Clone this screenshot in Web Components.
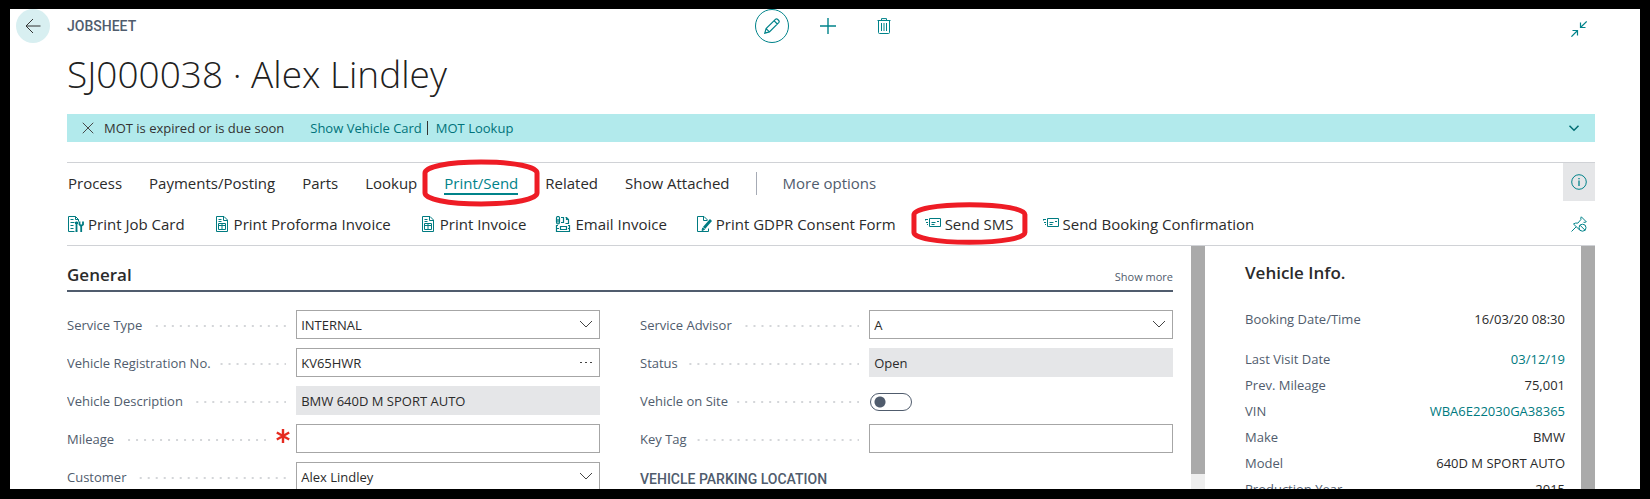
<!DOCTYPE html>
<html lang="en">
<head>
<meta charset="utf-8">
<title>Jobsheet SJ000038</title>
<style>
  body { margin: 0; background: #000; }
</style>
</head>
<body>
<job-app>
  <job-header slot="header" caption="Jobsheet" heading="SJ000038 · Alex Lindley"></job-header>
  <job-notice slot="header" message="MOT is expired or is due soon">
    <a slot="links" href="#vehicle">Show Vehicle Card</a>
    <a slot="links" href="#mot">MOT Lookup</a>
  </job-notice>
  <job-ribbon slot="header">
    <job-tab slot="tabs">Process</job-tab>
    <job-tab slot="tabs">Payments/Posting</job-tab>
    <job-tab slot="tabs">Parts</job-tab>
    <job-tab slot="tabs">Lookup</job-tab>
    <job-tab slot="tabs" active ring>Print/Send</job-tab>
    <job-tab slot="tabs">Related</job-tab>
    <job-tab slot="tabs">Show Attached</job-tab>
    <job-tab slot="more" quiet>More options</job-tab>
    <job-action slot="actions" icon="jobcard">Print Job Card</job-action>
    <job-action slot="actions" icon="invoice">Print Proforma Invoice</job-action>
    <job-action slot="actions" icon="invoice">Print Invoice</job-action>
    <job-action slot="actions" icon="email">Email Invoice</job-action>
    <job-action slot="actions" icon="consent">Print GDPR Consent Form</job-action>
    <job-action slot="actions" icon="send" ring>Send SMS</job-action>
    <job-action slot="actions" icon="send">Send Booking Confirmation</job-action>
  </job-ribbon>
  <job-section heading="General">
    <job-field slot="left" kind="select" label="Service Type" value="INTERNAL"></job-field>
    <job-field slot="left" kind="lookup" label="Vehicle Registration No." value="KV65HWR"></job-field>
    <job-field slot="left" kind="readonly" label="Vehicle Description" value="BMW 640D M SPORT AUTO"></job-field>
    <job-field slot="left" kind="text" label="Mileage" value="" required></job-field>
    <job-field slot="left" kind="select" label="Customer" value="Alex Lindley"></job-field>
    <job-field slot="right" kind="select" label="Service Advisor" value="A"></job-field>
    <job-field slot="right" kind="readonly" label="Status" value="Open"></job-field>
    <job-field slot="right" kind="toggle" label="Vehicle on Site"></job-field>
    <job-field slot="right" kind="text" label="Key Tag" value=""></job-field>
    <job-group slot="right">VEHICLE PARKING LOCATION</job-group>
  </job-section>
  <job-factbox slot="side" heading="Vehicle Info.">
    <job-fact label="Booking Date/Time" lead>16/03/20 08:30</job-fact>
    <job-fact label="Last Visit Date" link>03/12/19</job-fact>
    <job-fact label="Prev. Mileage">75,001</job-fact>
    <job-fact label="VIN" link>WBA6E22030GA38365</job-fact>
    <job-fact label="Make">BMW</job-fact>
    <job-fact label="Model">640D M SPORT AUTO</job-fact>
    <job-fact label="Production Year">2015</job-fact>
  </job-factbox>
</job-app>

<script>
const RESET = `
  *, *::before, *::after { box-sizing: border-box; }
  button { appearance: none; border: 0; margin: 0; padding: 0; background: none; font: inherit; color: inherit; }
  a { color: inherit; text-decoration: none; }
  svg { display: block; }
`;

const ICONS = {
  back: '<path d="M15.5 8H1M8 1L1 8l7 7"/>',
  pencil: '<path d="M.8 15.2l1.3-4.6L11.4 1.3q1-1 2.1 0l1.2 1.2q1 1 0 2.1L5.4 13.9zM2.1 10.6l3.3 3.3M10 2.7L13.3 6M1 14.2l.9.9" stroke-width="1.2"/>',
  plus: '<path d="M8 0v16M0 8h16" stroke-width="1.4"/>',
  trash: '<path d="M1.500 2.500h13M5.500 2.500V.6h5v1.900M2.500 2.500v12q0 1 1 1h9q1 0 1-1v-12M5.500 5v8M8 5v8M10.500 5v8"/>',
  collapse: '<path d="M15.700.4L9.500 6.500M9.500 1.500v5h5M.4 15.700L6.500 9.500M1.500 9.500h5v5" stroke-width="1.2"/>',
  info: '<circle cx="8" cy="8" r="7.300"/><path d="M8 6.600V12M8 4v1.200" stroke-width="1.3"/>',
  unpin: '<path d="M.5 15.500l4.700-4.700M2.500 8l5.600 5.500M2.500 8q2-1.400 4.400-.9l3-3.600q-.4-1.500.4-2.700l5 5q-1.300.8-2.800.5"/><circle cx="11.500" cy="11.700" r="3.500"/><path d="M9 9.200l5 5"/>',
  close: '<path d="M1 1l14 14M15 1L1 15" stroke-width="1.300"/>',
  jobcard: '<path d="M6.500 15.500h-6V.5h7l3 3v2M7.500.5v3h3M2.500 3.500h3M2.500 6.500h4M2.500 9.500h3M2.500 12.500h3"/><path d="M8.500 5.500v9.500M7 7h3M7.500 15h2" stroke-width="1.800"/><path d="M11.500 5.500v3l1.500 1.500 2-1.500v-3M13.200 10v6" stroke-width="1.800"/>',
  invoice: '<path d="M2.500.5h7.500l3.500 3.500v11.500h-11zM9.500.5v4h4M4.500 3.500h3M4.500 5.500h3M4.500 7.500h7v6h-7zM4.500 9.500h7M8 7.500v6"/>',
  email: '<path d="M1.500 2v4q0 2 1.500 2t1.500-2V2Q4.500.5 3 .5T1.500 2M3 3v3.500M6 1.500h2.500v5H6M10.500 1.500h1l2 2v4h-3M11.500 1.500v2h2M3 9.500H1.500v6h13v-6H13M5.500 10.500h6v3h-6zM1.500 12.500H4M13 12.500h1.500" stroke-width="1.200"/>',
  consent: '<path d="M8 .5H1.500v15h11v-3M8 .5L11.500 4M7.500.5v4h4"/><path d="M15 4L8 12" stroke-width="2.800"/><path d="M6 14.500l.7-2.500 1.800 1.500z" fill="currentColor"/>',
  send: '<path d="M4.500 2.500h11v8h-11zM6.500 6.500h4M6.500 8.500h3M12 5.500h2"/><path d="M0 3.500h3M1 6.500h2M0 4h1M2 8.500h1" stroke-width="1.200"/>',
  chevron: '<path d="M2 5l6 6 6-6"/>'
};
const icon = (name, size = 16) =>
  `<svg width="${size}" height="${size}" viewBox="0 0 16 16" fill="none" stroke="currentColor" aria-hidden="true">${ICONS[name]}</svg>`;

/* Hand-drawn red highlight laid over a tab or an action. */
const RING = `<svg class="ring" viewBox="0 0 118 48" preserveAspectRatio="none" fill="none" stroke="#ee1c25" stroke-width="5" aria-hidden="true">
  <path vector-effect="non-scaling-stroke" d="M3 14C3 8 25 3 59 3S115 8 115 14V34C115 40 93 45 59 45S3 40 3 34Z"/></svg>`;

class Base extends HTMLElement {
  connectedCallback() {
    if (this.shadowRoot) return;
    const root = this.attachShadow({ mode: 'open' });
    root.innerHTML = `<style>${RESET}${this.css()}</style>${this.html()}`;
  }
  attr(name) { return this.getAttribute(name) || ''; }
}

customElements.define('job-app', class extends Base {
  css() { return `
    :host { display: block; box-sizing: border-box; height: 100vh; padding: 9px 10px 10px;
      font: 13px/24px "Open Sans", "Noto Sans", sans-serif; color: #2b2b2b;
      --teal: #00838a; --label: #505c6d; --rule: #d0d2d6; --shade: #e5e6e8; }
    .page { display: flex; flex-direction: column; height: 100%; background: #fff; overflow: hidden; }
    .body { flex: 1; min-height: 0; display: grid; grid-template-columns: minmax(0, 1fr) 390px; margin: 0 45px 0 57px; }
    .pane { display: grid; grid-template-columns: minmax(0, 1fr) 14px; overflow: hidden; min-height: 0; }
    .content { overflow: hidden; min-height: 0; }
    .main .content { padding-right: 18px; }
    .side .content { padding: 0 16px 0 40px; }
    .bar { background: #eee; padding-bottom: 15px; }
    .bar i { display: block; height: 100%; background: #aaa; }
    .side .bar { padding: 0; }`; }
  html() { return `
    <div class="page">
      <slot name="header"></slot>
      <div class="body">
        <main class="pane main"><div class="content"><slot></slot></div><div class="bar"><i></i></div></main>
        <aside class="pane side"><div class="content"><slot name="side"></slot></div><div class="bar"><i></i></div></aside>
      </div>
    </div>`; }
});

customElements.define('job-header', class extends Base {
  css() { return `
    :host { display: block; padding-left: 6px; }
    .top { display: grid; grid-template-columns: 1fr auto 1fr; align-items: center; height: 34px; }
    .start, .tools { display: flex; align-items: center; }
    .start { gap: 17px; }
    .tools { gap: 22px; color: var(--teal); }
    .round { display: grid; place-items: center; width: 34px; height: 34px; border-radius: 50%; }
    .back { background: #d8eff1; color: #333; }
    .edit { border: 1px solid var(--teal); }
    .caption { font: 500 14px/20px Roboto, sans-serif; color: var(--label); text-transform: uppercase; }
    .collapse { justify-self: end; margin: 6px 53px 0 0; color: var(--teal); }
    h1 { margin: 5px 0 14px 51px; font-size: 37px; line-height: 52px; font-weight: 300; color: #212121; }`; }
  html() { return `
    <div class="top">
      <div class="start"><button class="round back" aria-label="Back">${icon('back')}</button><span class="caption">${this.attr('caption')}</span></div>
      <div class="tools">
        <button class="round edit" aria-label="Edit">${icon('pencil')}</button>
        <button class="round" aria-label="New">${icon('plus')}</button>
        <button class="round" aria-label="Delete">${icon('trash')}</button>
      </div>
      <button class="collapse" aria-label="Collapse">${icon('collapse')}</button>
    </div>
    <h1>${this.attr('heading')}</h1>`; }
});

customElements.define('job-notice', class extends Base {
  css() { return `
    :host { display: flex; align-items: center; height: 28px; margin: 0 45px 20px 57px; padding: 0 15px; background: #b2eaec; color: #333; }
    .close { margin-right: 10px; color: #444; }
    .links { display: flex; align-items: center; margin-left: 26px; color: #00737a; }
    ::slotted(a) { color: inherit; text-decoration: none; }
    ::slotted(a:last-child) { border-left: 1px solid #333; padding-left: 8px; margin-left: 5px; line-height: 14px; }
    .open { margin-left: auto; color: #006d73; }`; }
  html() { return `
    <button class="close" aria-label="Dismiss">${icon('close', 12)}</button>
    <span>${this.attr('message')}</span>
    <span class="links"><slot name="links"></slot></span>
    <button class="open" aria-label="Expand">${icon('chevron', 12).replace('stroke="currentColor"', 'stroke="currentColor" stroke-width="2"')}</button>`; }
});

customElements.define('job-ribbon', class extends Base {
  css() { return `
    :host { display: block; margin: 0 45px 0 57px; border-top: 1px solid var(--rule); border-bottom: 1px solid var(--rule); font-size: 15px; }
    .row { display: flex; align-items: center; padding-left: 1px; }
    .tabs { height: 40px; gap: 27px; }
    .actions { height: 42px; gap: 29px; }
    .split { width: 1px; height: 23px; background: #a6abb5; margin: 0 -1px; }
    .info { align-self: flex-start; display: grid; place-items: center; width: 32px; height: 38px; margin-left: auto; background: var(--shade); color: var(--teal); }
    .unpin { margin: 0 8px 0 auto; color: var(--teal); }`; }
  html() { return `
    <nav class="row tabs"><slot name="tabs"></slot><span class="split"></span><slot name="more"></slot>
      <button class="info" aria-label="Details">${icon('info')}</button></nav>
    <div class="row actions"><slot name="actions"></slot><button class="unpin" aria-label="Unpin">${icon('unpin')}</button></div>`; }
});

customElements.define('job-tab', class extends Base {
  css() { return `
    :host { display: block; position: relative; white-space: nowrap; }
    a { display: block; line-height: 24px; }
    :host([active]) a { color: var(--teal); box-shadow: inset 0 -2px var(--teal); }
    :host([quiet]) a { color: var(--label); }
    .ring { position: absolute; left: -22px; top: -12px; width: calc(100% + 44px); height: 48px; pointer-events: none; }`; }
  html() { return `<a href="#"><slot></slot></a>${this.hasAttribute('ring') ? RING : ''}`; }
});

customElements.define('job-action', class extends Base {
  css() { return `
    :host { display: block; position: relative; white-space: nowrap; }
    button { display: flex; align-items: center; gap: 4px; line-height: 24px; }
    button svg { color: #007b81; }
    .ring { position: absolute; left: -14px; top: -10px; width: calc(100% + 28px); height: 43px; pointer-events: none; }`; }
  html() { return `<button>${icon(this.attr('icon'))}<span><slot></slot></span></button>${this.hasAttribute('ring') ? RING : ''}`; }
});

customElements.define('job-section', class extends Base {
  css() { return `
    :host { display: block; }
    header { display: flex; align-items: flex-end; justify-content: space-between; padding: 17px 0 3px; border-bottom: 2px solid var(--label); }
    h2 { margin: 0; font-size: 17px; line-height: 24px; font-weight: 600; }
    header button { font-size: 11px; line-height: 20px; color: var(--label); }
    .cols { display: grid; grid-template-columns: 1fr 1fr; gap: 40px; padding-top: 18px; }
    .col { display: flex; flex-direction: column; gap: 9px; }`; }
  html() { return `
    <header><h2>${this.attr('heading')}</h2><button>Show more</button></header>
    <div class="cols"><div class="col"><slot name="left"></slot></div><div class="col"><slot name="right"></slot></div></div>`; }
});

customElements.define('job-group', class extends Base {
  css() { return `:host { display: block; padding-top: 5px; font: 500 14px/24px Roboto, sans-serif; color: var(--label); }`; }
  html() { return '<slot></slot>'; }
});

customElements.define('job-field', class extends Base {
  css() { return `
    :host { display: grid; grid-template-columns: 43% 57%; height: 29px; align-items: center; }
    .name { display: flex; align-items: center; color: var(--label); white-space: nowrap; }
    .dots { flex: 1; height: 2px; margin: 2px 10px 0 9px;
      background: linear-gradient(90deg, transparent 6px, #d4d6d9 6px) right / 8px 2px repeat-x; }
    .star { margin: -6px 6px 0 0; color: #e52b20; }
    .box { position: relative; height: 29px; display: flex; align-items: center; }
    input[type=text], select { appearance: none; width: 100%; height: 29px; margin: 0; padding: 0 4px; border: 1px solid #a6a6a6; border-radius: 0;
      background: #fff; font: inherit; line-height: 24px; color: #2b2b2b; outline: 0; }
    input[readonly] { background: var(--shade); border-color: var(--shade); }
    .mark { position: absolute; right: 6px; top: 6px; width: 16px; height: 16px; color: #444; pointer-events: none; }
    input[type=checkbox] { appearance: none; width: 42px; height: 18px; margin: 2px 0 0 1px; border: 1px solid var(--label); border-radius: 9px;
      background: radial-gradient(circle at 9px 8px, var(--label) 5px, transparent 6px); }`; }
  html() {
    const value = this.attr('value');
    const dots = '<svg width="16" height="16" viewBox="0 0 16 16" fill="currentColor"><path d="M2 8h2v1H2zM7 8h2v1H7zM12 8h2v1h-2z"/></svg>';
    const control = {
      select: () => `<select id="c"><option>${value}</option></select><span class="mark">${icon('chevron')}</span>`,
      lookup: () => `<input id="c" type="text" value="${value}"><button class="mark" aria-label="Look up">${dots}</button>`,
      readonly: () => `<input id="c" type="text" value="${value}" readonly>`,
      text: () => `<input id="c" type="text" value="${value}">`,
      toggle: () => '<input id="c" type="checkbox">'
    }[this.attr('kind')]();
    const star = this.hasAttribute('required')
      ? '<svg class="star" width="14" height="14" viewBox="0 0 14 14" fill="none" stroke="currentColor" stroke-width="2.400"><path d="M7 0v14M.8 3.500l12.400 7M13.200 3.500L.8 10.500"/></svg>' : '';
    return `<div class="name"><label for="c">${this.attr('label')}</label><span class="dots"></span>${star}</div><div class="box">${control}</div>`;
  }
});

customElements.define('job-factbox', class extends Base {
  css() { return `
    :host { display: block; padding-top: 15px; }
    h2 { margin: 0 0 21px; font-size: 17px; line-height: 24px; font-weight: 600; }`; }
  html() { return `<h2>${this.attr('heading')}</h2><slot></slot>`; }
});

customElements.define('job-fact', class extends Base {
  css() { return `
    :host { display: flex; justify-content: space-between; line-height: 26px; white-space: nowrap; }
    :host([lead]) { margin-bottom: 14px; }
    .name { color: var(--label); }
    a { color: #007a80; }`; }
  html() {
    const value = this.hasAttribute('link') ? '<a href="#"><slot></slot></a>' : '<span><slot></slot></span>';
    return `<span class="name">${this.attr('label')}</span>${value}`;
  }
});
</script>
</body>
</html>
